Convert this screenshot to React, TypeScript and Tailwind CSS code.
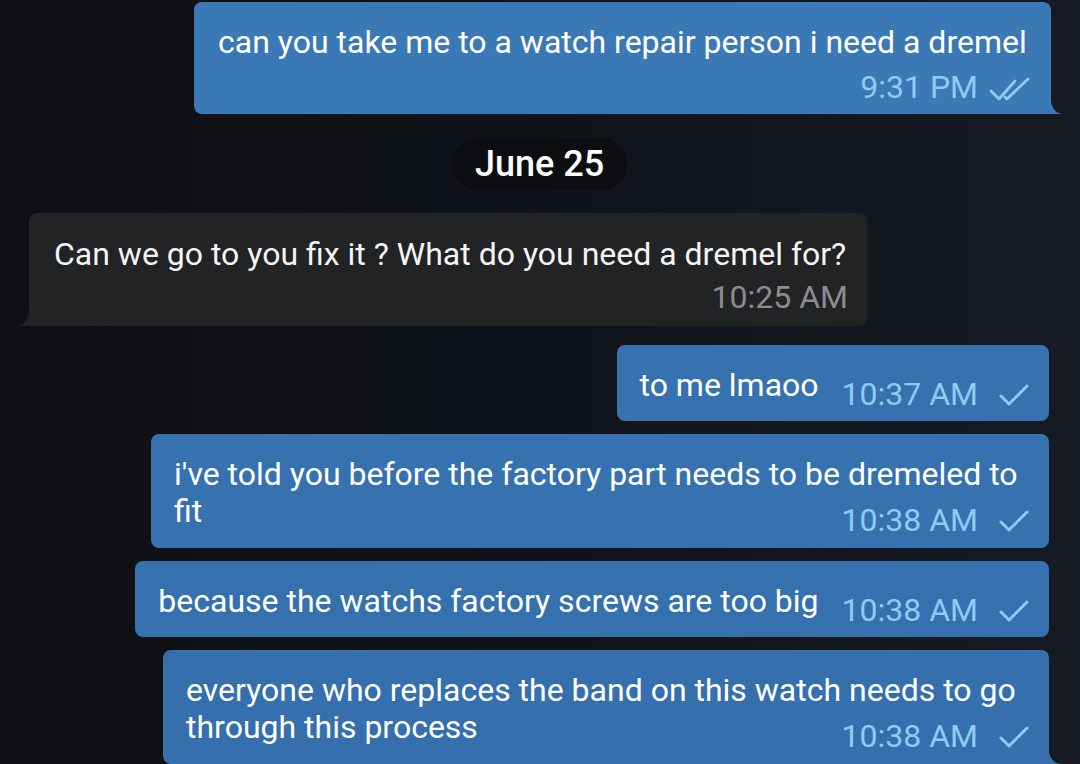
import React from "react";

const Check = () => (
  <svg width="32" height="28" viewBox="0 0 32 28" className="inline-block">
    <path d="M3 15 L11 23 L29 5" fill="none" stroke="#8fcbf3" strokeWidth="3" strokeLinecap="round" strokeLinejoin="round" />
  </svg>
);

const DoubleCheck = () => (
  <svg width="44" height="28" viewBox="0 0 44 28" className="inline-block">
    <path d="M3 15 L11 23 L27 5" fill="none" stroke="#8fcbf3" strokeWidth="2.8" strokeLinecap="round" strokeLinejoin="round" />
    <path d="M17 21 L19 23 L40 3" fill="none" stroke="#8fcbf3" strokeWidth="2.8" strokeLinecap="round" strokeLinejoin="round" />
  </svg>
);

const TailRight = ({ color }: { color: string }) => (
  <svg width="14" height="22" viewBox="0 0 14 22" className="absolute bottom-0 right-[-13px]">
    <path d="M0 0 Q0 22 14 22 L0 22 Z" fill={color} />
  </svg>
);

const TailLeft = ({ color }: { color: string }) => (
  <svg width="16" height="24" viewBox="0 0 16 24" className="absolute bottom-0 left-[-15px]">
    <path d="M16 0 Q16 24 0 24 L16 24 Z" fill={color} />
  </svg>
);

const Time = ({ t, check }: { t: string; check?: "single" | "double" }) => (
  <span className="inline-flex items-center gap-[20px] text-[32px] leading-[37px] text-[#8fcbf3]">
    <span>{t}</span>
    {check === "single" && <Check />}
    {check === "double" && <span className="-ml-[10px]"><DoubleCheck /></span>}
  </span>
);

export default function App() {
  return (
    <div
      className="w-[1080px] h-[764px] overflow-hidden bg-gradient-to-r from-[#0d0f13] via-[#101319] to-[#161a22] text-white"
      style={{ fontFamily: "Roboto, 'Noto Sans', sans-serif" }}
    >
      <div className="flex flex-col pt-[2px]">
        {/* bubble 1 */}
        <div className="self-end mr-[29px] relative bg-[#3b79b6] rounded-[8px] rounded-br-none pl-[24px] pr-[19px] pt-[22px] pb-[8px] w-[857px]">
          <div className="text-[32px] leading-[37px]">can you take me to a watch repair person i need a dremel</div>
          <div className="flex justify-end mt-[8px]">
            <Time t="9:31 PM" check="double" />
          </div>
          <TailRight color="#3b79b6" />
        </div>

        {/* date */}
        <div className="self-start ml-[452px] mt-[24px] w-[175px] h-[52px] rounded-full bg-[#0b0d10] flex items-center justify-center">
          <span className="text-[36px] font-medium leading-none">June 25</span>
        </div>

        {/* incoming */}
        <div className="self-start ml-[29px] mt-[23px] relative bg-[#222325] rounded-[8px] rounded-bl-none pl-[25px] pr-[19px] pt-[23px] pb-[10px] w-[838px]">
          <div className="text-[32px] leading-[37px] text-[#f4f4f5]">Can we go to you fix it ? What do you need a dremel for?</div>
          <div className="flex justify-end mt-[6px]">
            <span className="text-[32px] leading-[37px] text-[#8a8c90]">10:25 AM</span>
          </div>
          <TailLeft color="#222325" />
        </div>

        {/* to me lmaoo */}
        <div className="self-end mr-[31px] mt-[19px] bg-[#3672b0] rounded-[8px] pl-[23px] pr-[19px] pt-[22px] pb-[8px] flex items-start">
          <span className="text-[32px] leading-[37px]">to me lmaoo</span>
          <span className="ml-[23px] mt-[9px]"><Time t="10:37 AM" check="single" /></span>
        </div>

        {/* i've told */}
        <div className="self-end mr-[31px] mt-[13px] bg-[#3672b0] rounded-[8px] pl-[23px] pr-[19px] pt-[22px] pb-[9px] w-[898px]">
          <div className="text-[32px] leading-[37px]">i've told you before the factory part needs to be dremeled to fit</div>
          <div className="flex justify-end -mt-[28px]">
            <Time t="10:38 AM" check="single" />
          </div>
        </div>

        {/* because */}
        <div className="self-end mr-[31px] mt-[13px] bg-[#3570af] rounded-[8px] pl-[23px] pr-[19px] pt-[22px] pb-[8px] flex items-start">
          <span className="text-[32px] leading-[37px]">because the watchs factory screws are too big</span>
          <span className="ml-[23px] mt-[9px]"><Time t="10:38 AM" check="single" /></span>
        </div>

        {/* everyone */}
        <div className="self-end mr-[31px] mt-[13px] relative bg-[#356fae] rounded-[8px] rounded-br-none pl-[23px] pr-[19px] pt-[22px] pb-[9px] w-[886px]">
          <div className="text-[32px] leading-[37px]">everyone who replaces the band on this watch needs to go through this process</div>
          <div className="flex justify-end -mt-[28px]">
            <Time t="10:38 AM" check="single" />
          </div>
          <TailRight color="#356fae" />
        </div>
      </div>
    </div>
  );
}
